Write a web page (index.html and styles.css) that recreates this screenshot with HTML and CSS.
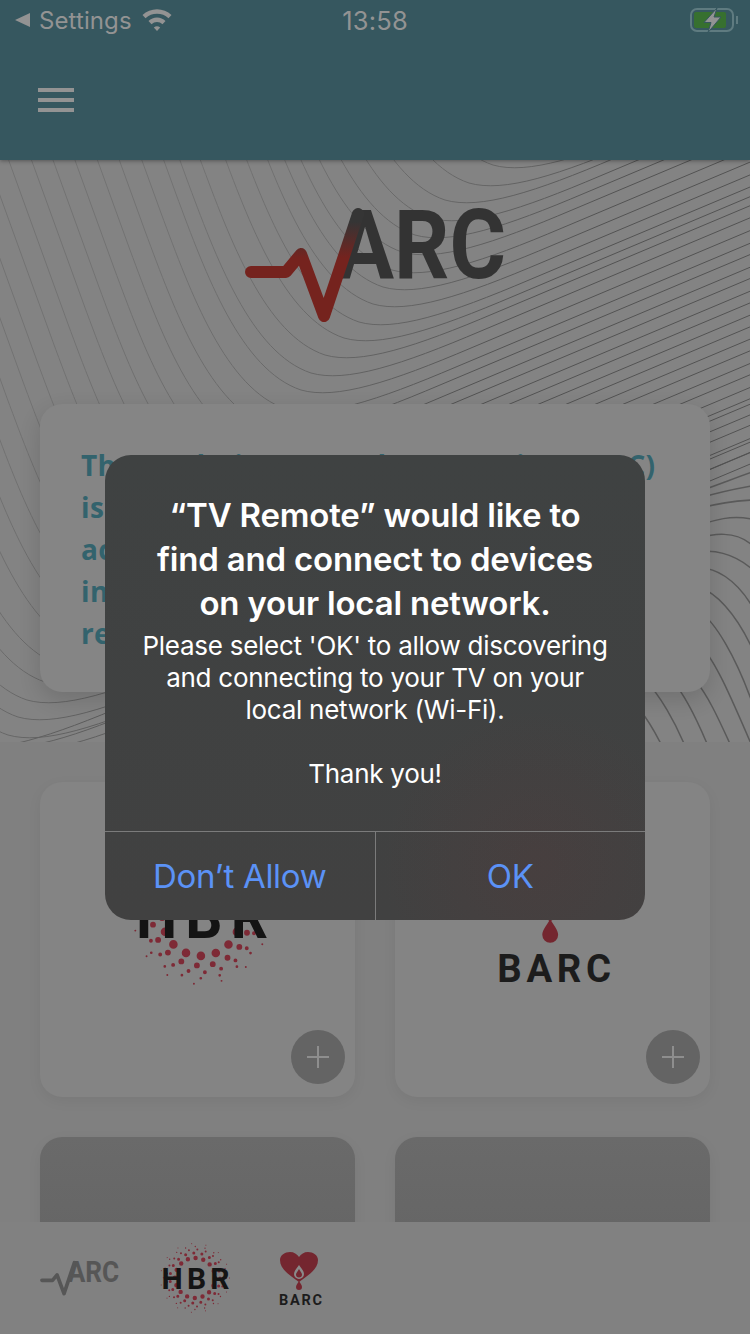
FILE: index.html
```html
<!DOCTYPE html>
<html lang="en">
<head>
<meta charset="utf-8">
<title>TV Remote</title>
<link rel="stylesheet" href="styles.css">
</head>
<body>
<svg class="defs" width="0" height="0" aria-hidden="true">
  <defs>
    <linearGradient id="pulse-fade" gradientUnits="userSpaceOnUse" x1="0" y1="258" x2="0" y2="222">
      <stop offset="0" stop-color="#75231e"/>
      <stop offset="1" stop-color="#353535"/>
    </linearGradient>
    <linearGradient id="line-fade" gradientUnits="userSpaceOnUse" x1="-120" y1="0" x2="220" y2="0">
      <stop offset="0" stop-color="#727272"/>
      <stop offset="1" stop-color="#525252"/>
    </linearGradient>
    <path id="contour" d="M-230 -486 L-125 -196 C-95 -115 -60 -20 0 0 C35 10 90 -8 170 -42 L800 -307"/>
    <symbol id="logo-arc" viewBox="245 205 260 122">
      <text class="arc-word" x="336" y="278" textLength="170" lengthAdjust="spacingAndGlyphs">ARC</text>
      <path class="arc-pulse" d="M251 272 H286 L301 254 L324 316 L358 214"/>
    </symbol>
    <symbol id="logo-hbr" viewBox="-36 -36 72 72">
      <g class="hbr-dots">
        <circle r="20" stroke-width="4.4" stroke-dasharray="0 7.854"/>
        <circle r="25" stroke-width="3" stroke-dasharray="0 8.27"/>
        <circle r="28.5" stroke-width="2" stroke-dasharray="0 8.53"/>
        <circle r="31.5" stroke-width="1.4" stroke-dasharray="0 9.9"/>
        <circle r="34.5" stroke-width="1" stroke-dasharray="0 14.45"/>
      </g>
      <text class="hbr-word" x="-33.500" y="11" textLength="68" lengthAdjust="spacing">HBR</text>
    </symbol>
    <symbol id="logo-barc" viewBox="0 0 44 56">
      <path class="barc-red" d="M20 32 C12 26 1 20 1 10 C1 5 6 2 11 2 C15 2 18 4 20 7 C22 4 25 2 29 2 C34 2 39 5 39 10 C39 20 28 26 20 32Z"/>
      <path class="barc-cut" d="M20 15 C22 18 25 21 25 24 A5 5 0 0 1 15 24 C15 21 18 18 20 15Z"/>
      <path class="barc-red" d="M20 19 C21 21 23 23 23 24.500 A3 3 0 0 1 17 24.500 C17 23 19 21 20 19Z"/>
      <path class="barc-red" d="M20 31 C21 33 23 35 23 37 A3 3 0 0 1 17 37 C17 35 19 33 20 31Z"/>
      <text class="barc-word" x="0" y="55" textLength="43" lengthAdjust="spacing">BARC</text>
    </symbol>
  </defs>
</svg>

<div class="screen">
  <header class="app-header">
    <div class="status-bar">
      <div class="status-left">
        <svg class="back-arrow" width="15" height="14" viewBox="0 0 15 14"><path d="M15 0 V14 L0 7Z"/></svg>
        <span>Settings</span>
        <svg class="wifi" width="30" height="24" viewBox="0 0 30 24">
          <path d="M15 23 L11.800 19.500 A5 5 0 0 1 18.200 19.500Z"/>
          <path d="M6.500 13 A12 12 0 0 1 23.500 13 L20.500 16.200 A8 8 0 0 0 9.500 16.200Z"/>
          <path d="M.5 7 A21 21 0 0 1 29.500 7 L26.500 10.200 A17 17 0 0 0 3.500 10.200Z"/>
        </svg>
      </div>
      <time class="status-time">13:58</time>
      <div class="status-right">
        <svg class="battery" width="49" height="26" viewBox="0 -1 49 26">
          <rect class="battery-shell" x="1" y="1" width="42" height="22" rx="6"/>
          <rect class="battery-fill" x="4" y="4" width="32" height="16" rx="2"/>
          <path class="battery-cap" d="M47 8 V16"/>
          <path class="battery-bolt" d="M27 0 L14 14.500 H21 L18 24.500 L31 9 H24Z"/>
        </svg>
      </div>
    </div>
    <div class="toolbar">
      <div class="menu-icon"><span></span><span></span><span></span></div>
    </div>
  </header>

  <main class="content">
    <section class="hero">
      <svg class="contours" viewBox="0 160 750 582" width="750" height="582" aria-hidden="true">
        <g class="contour-family">
          <use href="#contour" transform="translate(493 165)"/>
          <use href="#contour" transform="translate(469 183)"/>
          <use href="#contour" transform="translate(445 200)"/>
          <use href="#contour" transform="translate(430 218)"/>
          <use href="#contour" transform="translate(415 235)"/>
          <use href="#contour" transform="translate(402 252)"/>
          <use href="#contour" transform="translate(392 270)"/>
          <use href="#contour" transform="translate(383 287)"/>
          <use href="#contour" transform="translate(373 304)"/>
          <use href="#contour" transform="translate(359 322)"/>
          <use href="#contour" transform="translate(344 338)"/>
          <use href="#contour" transform="translate(325 355)"/>
          <use href="#contour" transform="translate(311 373)"/>
          <use href="#contour" transform="translate(301 390)"/>
          <use href="#contour" transform="translate(286 409)"/>
          <use href="#contour" transform="translate(270 427)"/>
          <use href="#contour" transform="translate(255 446)"/>
          <use href="#contour" transform="translate(239 464)"/>
          <use href="#contour" transform="translate(224 483)"/>
          <use href="#contour" transform="translate(209 501)"/>
          <use href="#contour" transform="translate(193 520)"/>
          <use href="#contour" transform="translate(178 538)"/>
          <use href="#contour" transform="translate(162 557)"/>
          <use href="#contour" transform="translate(147 575)"/>
          <use href="#contour" transform="translate(132 594)"/>
          <use href="#contour" transform="translate(116 612)"/>
          <use href="#contour" transform="translate(101 631)"/>
          <use href="#contour" transform="translate(85 649)"/>
          <use href="#contour" transform="translate(60 665)"/>
          <use href="#contour" transform="translate(45 682)"/>
          <use href="#contour" transform="translate(27 700)"/>
          <use href="#contour" transform="translate(18 717)"/>
          <use href="#contour" transform="translate(8 735)"/>
          <use href="#contour" transform="translate(-40 745)"/>
          <use href="#contour" transform="translate(-15 745)"/>
          <use href="#contour" transform="translate(5 748)"/>
        </g>
        <g class="contour-ridge">
          <path d="M700 491 C720 484 735 478 752 472"/>
          <path d="M700 498 C720 492 735 489 752 486"/>
          <path d="M700 508 C720 503 735 501 752 500"/>
          <path d="M700 525 C715 520 730 515 752 519"/>
          <path d="M700 538 C712 534 735 530 752 545"/>
          <path d="M700 552 C712 550 732 552 752 569"/>
          <path d="M700 568 C715 568 735 578 752 606"/>
          <path d="M700 588 C715 592 735 612 752 648"/>
          <path d="M700 612 C715 622 735 655 752 702"/>
          <path d="M700 645 C715 660 730 695 752 746"/>
          <path d="M695 680 C708 695 720 722 731 746"/>
          <path d="M672 680 C685 695 698 722 708 746"/>
          <path d="M645 680 C660 695 675 722 685 746"/>
          <path d="M640 710 C648 720 655 732 662 746"/>
        </g>
      </svg>
      <svg class="hero-logo" width="260" height="122"><use href="#logo-arc"/></svg>
      <article class="intro-card">
        <p>The Analytic Research Consortium (ARC)<br>is a group<br>academic<br>investigators<br>researchers</p>
      </article>
    </section>

    <section class="programs">
      <article class="program-card">
        <svg class="logo-hbr" width="140" height="140"><use href="#logo-hbr"/></svg>
        <div class="add-button"><svg width="24" height="24" viewBox="0 0 24 24"><path d="M12 1 V23 M1 12 H23"/></svg></div>
      </article>
      <article class="program-card">
        <svg class="logo-barc" width="117" height="148"><use href="#logo-barc"/></svg>
        <div class="add-button"><svg width="24" height="24" viewBox="0 0 24 24"><path d="M12 1 V23 M1 12 H23"/></svg></div>
      </article>
      <article class="program-card is-dark"></article>
      <article class="program-card is-dark"></article>
    </section>
  </main>

  <nav class="tab-bar">
    <svg class="tab-arc" width="79" height="37"><use href="#logo-arc"/></svg>
    <svg width="72" height="72"><use href="#logo-hbr"/></svg>
    <svg class="tab-barc" width="44" height="56"><use href="#logo-barc"/></svg>
  </nav>

  <div class="alert-layer">
    <div class="alert" role="alertdialog">
      <div class="alert-body">
        <h1>“TV Remote” would like to find and connect to devices on your local network.</h1>
        <p>Please select 'OK' to allow discovering and connecting to your TV on your local network (Wi-Fi).<br><br>Thank you!</p>
      </div>
      <div class="alert-actions">
        <div class="alert-action">Don’t Allow</div>
        <div class="alert-action">OK</div>
      </div>
    </div>
  </div>
</div>
</body>
</html>
```
FILE: styles.css
```css
* { box-sizing: border-box; margin: 0; padding: 0; }
html, body { width: 750px; height: 1334px; overflow: hidden; }
body { font-family: Inter, "Liberation Sans", sans-serif; background: #808080; }
.defs { display: block; width: 0; height: 0; }

.screen {
  --pulse: url(#pulse-fade);
  --ink: #333333;
  position: relative;
  width: 750px;
  height: 1334px;
  display: flex;
  flex-direction: column;
  overflow: hidden;
  background: #818181;
}

/* header */
.app-header {
  position: relative;
  z-index: 2;
  flex: 0 0 160px;
  background: #36575f;
  box-shadow: 0 1px 4px rgba(0, 0, 0, .35);
  color: #939393;
}
.status-bar {
  height: 40px;
  display: grid;
  grid-template-columns: 1fr auto 1fr;
  align-items: center;
  font-size: 24px;
  padding: 0 13px;
}
.status-left { display: flex; align-items: center; }
.back-arrow { fill: #939393; margin: 0 9px 0 2px; }
.status-left span { margin-right: 10px; letter-spacing: .1px; }
.wifi { fill: #939393; }
.status-time { font-size: 25.500px; letter-spacing: .2px; }
.status-right { display: flex; justify-content: flex-end; }
.battery { margin-right: -2px; }
.battery-shell { fill: none; stroke: #5f7b80; stroke-width: 2; }
.battery-fill { fill: #37702f; }
.battery-cap { stroke: #5f7b80; stroke-width: 2; }
.battery-bolt { fill: #939393; stroke: #36575f; stroke-width: 1; }
.toolbar { height: 120px; display: flex; align-items: center; padding-left: 38px; }
.menu-icon { width: 36px; display: flex; flex-direction: column; gap: 6px; }
.menu-icon span { display: block; height: 4px; background: #939393; }

/* main */
.content { flex: 1; min-height: 0; overflow: hidden; background: #808080; }
.hero {
  position: relative;
  height: 582px;
  padding-top: 45px;
  display: flex;
  flex-direction: column;
  align-items: center;
  background: #838383;
}
.contours { position: absolute; left: 0; top: 0; }
.contour-family { fill: none; stroke: url(#line-fade); stroke-width: 1; }
.contour-ridge { fill: none; stroke: #5a5a5a; stroke-width: 1.500; }
.hero-logo { position: relative; display: block; flex: none; }
.arc-word { font-family: Roboto, sans-serif; font-weight: 700; font-size: 96px; fill: var(--ink); }
.arc-pulse { fill: none; stroke: var(--pulse); stroke-width: 12; stroke-linecap: round; stroke-linejoin: round; }

.intro-card {
  position: relative;
  margin-top: 77px;
  width: 670px;
  height: 288px;
  padding: 40px 0 0 41px;
  border-radius: 22px;
  background: #858585;
  box-shadow: 0 8px 22px rgba(0, 0, 0, .14);
  font-family: "Open Sans", sans-serif;
  font-weight: 700;
  font-size: 28px;
  line-height: 42px;
  letter-spacing: .35px;
  color: #33636d;
  white-space: nowrap;
}

.programs {
  display: grid;
  grid-template-columns: 315px 315px;
  grid-auto-rows: 315px;
  gap: 40px;
  padding: 40px 40px 0;
}
.program-card {
  position: relative;
  display: flex;
  justify-content: center;
  align-items: flex-start;
  border-radius: 22px;
  background: #848484;
  box-shadow: 0 4px 14px rgba(0, 0, 0, .06);
}
.program-card.is-dark { background: linear-gradient(#6a6a6a, #5c5c5c); }
.logo-hbr { margin: 65px 0 0 7px; }
.logo-barc { margin: 55px 0 0 6px; }
.add-button {
  position: absolute;
  right: 10px;
  bottom: 13px;
  width: 54px;
  height: 54px;
  display: flex;
  align-items: center;
  justify-content: center;
  border-radius: 50%;
  background: #646464;
}
.add-button path { stroke: #8e8e8e; stroke-width: 2; fill: none; }

/* logos */
.hbr-dots circle { fill: none; stroke: #7e2a36; stroke-linecap: round; }
.hbr-word { font-family: Roboto, sans-serif; font-weight: 700; font-size: 30px; fill: #141414; }
.barc-red { fill: #74262f; }
.barc-cut { fill: #8a8a8a; }
.barc-word { font-family: Roboto, sans-serif; font-weight: 700; font-size: 14.500px; fill: #1c1c1c; }

/* tab bar */
.tab-bar {
  position: relative;
  flex: 0 0 112px;
  display: flex;
  align-items: center;
  gap: 40px;
  padding-left: 40px;
  background: #818181;
}
.tab-arc { --pulse: #565656; --ink: #565656; }
.tab-barc { margin-left: 8px; }

/* alert */
.alert-layer {
  position: absolute;
  inset: 0;
  z-index: 3;
  display: flex;
  justify-content: center;
  align-items: flex-start;
  padding-top: 455px;
}
.alert {
  width: 540px;
  border-radius: 26px;
  overflow: hidden;
  color: #fff;
  text-align: center;
  background:
    radial-gradient(circle at 80% 88%, rgba(110, 50, 50, .14), rgba(110, 50, 50, 0) 26%),
    linear-gradient(#3f4242, #414141);
}
.alert-body { padding: 38px 30px 41px; }
.alert h1 { margin: 0 15px; font-size: 33px; line-height: 44px; font-weight: 600; letter-spacing: -.2px; }
.alert p { margin-top: 5px; font-size: 26px; line-height: 32px; font-weight: 400; letter-spacing: -.26px; }
.alert-actions { display: flex; height: 89px; border-top: 1px solid #7b7b7b; }
.alert-action {
  flex: 1;
  display: flex;
  align-items: center;
  justify-content: center;
  font-size: 33px;
  letter-spacing: -.3px;
  color: #5b92f6;
}
.alert-action + .alert-action { border-left: 1px solid #7b7b7b; }
```
